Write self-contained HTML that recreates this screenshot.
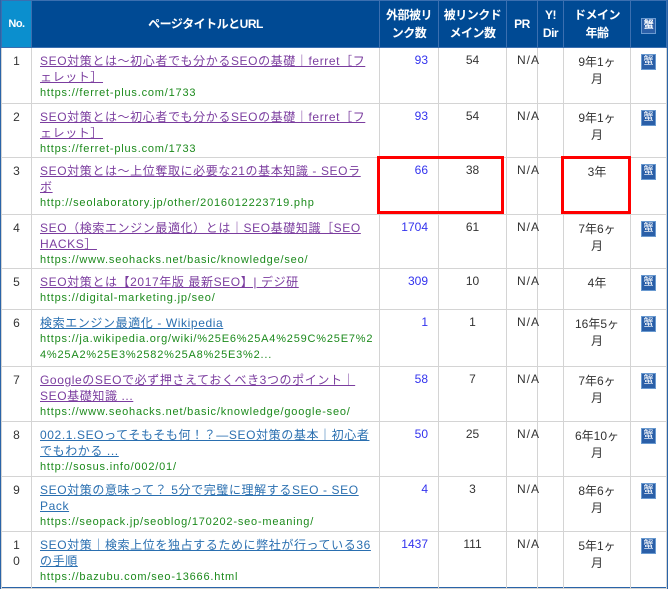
<!DOCTYPE html>
<html><head><meta charset="utf-8"><style>
body{margin:0;background:#fff;width:670px;height:591px;overflow:hidden;font-family:"Liberation Sans","Noto Sans CJK JP",sans-serif;}
.wrap{position:absolute;left:0;top:0;width:665px;height:587px;border:1px solid #2a64a8;border-width:0 2px 2px 1px;}
table{border-collapse:collapse;table-layout:fixed;width:665px;}
td,th{border:1px solid #d4d4d4;vertical-align:top;padding:0;font-size:12px;color:#333;}
th{background:#004a94;color:#fff;font-weight:bold;font-size:12px;vertical-align:middle;line-height:18px;border-color:#3b6fb0;letter-spacing:-0.5px}
th.no{background:#0b8fce;font-size:11px}
td{padding-top:5px;}
.t{padding-left:8px;padding-right:6px;line-height:16px;}
.t a{color:#7b3d9f;text-decoration:underline;font-size:12px;letter-spacing:0.6px}
.t a.b{color:#2a6fb0}
.u{color:#1c8a1c;font-size:11px;line-height:16px;letter-spacing:0.8px;white-space:nowrap;overflow:hidden}
.n{text-align:center;line-height:16px}
.e{text-align:right;padding-right:10px;color:#3333ee}
.c{text-align:center}
.pr{padding-left:10px;white-space:nowrap;overflow:visible;letter-spacing:1px}
.ic{display:inline-block;width:13px;height:14px;background:#2a5fa8;color:#fff;font-size:10px;line-height:14px;text-align:center;border:1px solid #6a9ad0;margin-top:-2px}
.red{position:absolute;border:3px solid #f00;}
</style></head><body>
<div class="wrap">
<table>
<colgroup><col style="width:30px"><col style="width:348px"><col style="width:59px"><col style="width:68px"><col style="width:31px"><col style="width:26px"><col style="width:67px"><col style="width:36px"></colgroup>
<tr style="height:47px"><th class="no">No.</th><th>ページタイトルとURL</th><th>外部被リ<br>ンク数</th><th>被リンクド<br>メイン数</th><th>PR</th><th>Y!<br>Dir</th><th>ドメイン<br>年齢</th><th><span class="ic">蟹</span></th></tr>
<tr style="height:56px"><td class="n">1</td><td class="t"><a>SEO対策とは～初心者でも分かるSEOの基礎｜ferret［フェレット］</a><div class="u">https://ferret-plus.com/1733</div></td><td class="e">93</td><td class="c">54</td><td class="pr">N/A</td><td></td><td class="c">9年1ヶ<br>月</td><td class="c"><span class="ic">蟹</span></td></tr>
<tr style="height:54px"><td class="n">2</td><td class="t"><a>SEO対策とは～初心者でも分かるSEOの基礎｜ferret［フェレット］</a><div class="u">https://ferret-plus.com/1733</div></td><td class="e">93</td><td class="c">54</td><td class="pr">N/A</td><td></td><td class="c">9年1ヶ<br>月</td><td class="c"><span class="ic">蟹</span></td></tr>
<tr style="height:57px"><td class="n">3</td><td class="t"><a>SEO対策とは～上位奪取に必要な21の基本知識 - SEOラボ</a><div class="u">http://seolaboratory.jp/other/2016012223719.php</div></td><td class="e">66</td><td class="c">38</td><td class="pr">N/A</td><td></td><td class="c">3年</td><td class="c"><span class="ic">蟹</span></td></tr>
<tr style="height:54px"><td class="n">4</td><td class="t"><a>SEO（検索エンジン最適化）とは｜SEO基礎知識［SEO HACKS］</a><div class="u">https://www.seohacks.net/basic/knowledge/seo/</div></td><td class="e">1704</td><td class="c">61</td><td class="pr">N/A</td><td></td><td class="c">7年6ヶ<br>月</td><td class="c"><span class="ic">蟹</span></td></tr>
<tr style="height:41px"><td class="n">5</td><td class="t"><a>SEO対策とは【2017年版 最新SEO】| デジ研</a><div class="u">https://digital-marketing.jp/seo/</div></td><td class="e">309</td><td class="c">10</td><td class="pr">N/A</td><td></td><td class="c">4年</td><td class="c"><span class="ic">蟹</span></td></tr>
<tr style="height:57px"><td class="n">6</td><td class="t"><a class="b">検索エンジン最適化 - Wikipedia</a><div class="u">https://ja.wikipedia.org/wiki/%25E6%25A4%259C%25E7%25B<br>4%25A2%25E3%2582%25A8%25E3%2...</div></td><td class="e">1</td><td class="c">1</td><td class="pr">N/A</td><td></td><td class="c">16年5ヶ<br>月</td><td class="c"><span class="ic">蟹</span></td></tr>
<tr style="height:55px"><td class="n">7</td><td class="t"><a>GoogleのSEOで必ず押さえておくべき3つのポイント｜SEO基礎知識 ...</a><div class="u">https://www.seohacks.net/basic/knowledge/google-seo/</div></td><td class="e">58</td><td class="c">7</td><td class="pr">N/A</td><td></td><td class="c">7年6ヶ<br>月</td><td class="c"><span class="ic">蟹</span></td></tr>
<tr style="height:55px"><td class="n">8</td><td class="t"><a class="b">002.1.SEOってそもそも何！？―SEO対策の基本｜初心者でもわかる ...</a><div class="u">http://sosus.info/002/01/</div></td><td class="e">50</td><td class="c">25</td><td class="pr">N/A</td><td></td><td class="c">6年10ヶ<br>月</td><td class="c"><span class="ic">蟹</span></td></tr>
<tr style="height:55px"><td class="n">9</td><td class="t"><a class="b">SEO対策の意味って？ 5分で完璧に理解するSEO - SEO Pack</a><div class="u">https://seopack.jp/seoblog/170202-seo-meaning/</div></td><td class="e">4</td><td class="c">3</td><td class="pr">N/A</td><td></td><td class="c">8年6ヶ<br>月</td><td class="c"><span class="ic">蟹</span></td></tr>
<tr style="height:57px"><td class="n">1<br>0</td><td class="t"><a class="b">SEO対策｜検索上位を独占するために弊社が行っている36の手順</a><div class="u">https://bazubu.com/seo-13666.html</div></td><td class="e">1437</td><td class="c">111</td><td class="pr">N/A</td><td></td><td class="c">5年1ヶ<br>月</td><td class="c"><span class="ic">蟹</span></td></tr>
</table>
</div>
<div class="red" style="left:377px;top:156px;width:121px;height:52px"></div>
<div class="red" style="left:561px;top:156px;width:64px;height:52px"></div>
</body></html>
